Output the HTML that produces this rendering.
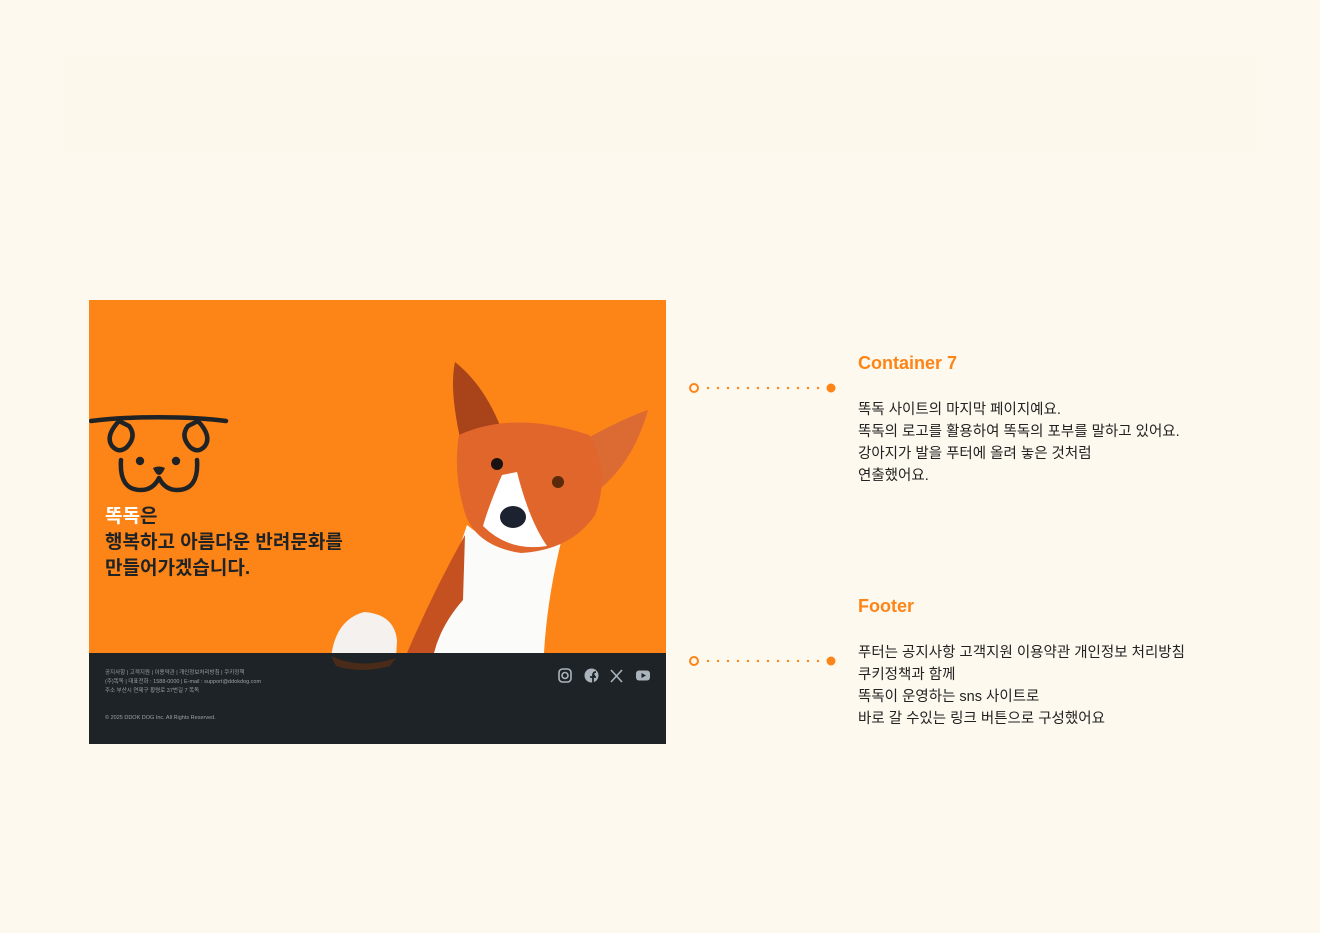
<!DOCTYPE html>
<html><head><meta charset="utf-8"><style>
body{margin:0;width:1320px;height:933px;background:#fef9ee;font-family:"Liberation Sans","Noto Sans CJK KR",sans-serif;position:relative;overflow:hidden}
.band{position:absolute;left:65px;top:55px;width:1190px;height:98px;background:#fdf8ec}
.frame{position:absolute;left:89px;top:300px;width:577px;height:444px;background:#fd8417;overflow:hidden}
.foot{position:absolute;left:0;top:353px;width:577px;height:91px;background:#1e2327}
.ft{position:absolute;left:16px;color:#9aa0a5;font-size:5.5px;line-height:9px}
.h{position:absolute;left:16px;top:204px;font-size:19px;font-weight:bold;line-height:26px;color:#1f2326}
.t{position:absolute;left:858px;color:#fd8417;font-size:18px;font-weight:bold}
.p{position:absolute;left:858px;color:#222;font-size:14.5px;line-height:22px}
</style></head><body>
<div class="band"></div>
<div class="frame">
<svg width="577" height="444" style="position:absolute;left:0;top:0">
<g fill="none" stroke="#1f2326" stroke-width="4.5" stroke-linecap="round" stroke-linejoin="round">
<path d="M2 121 C40 116 100 116 137 121"/>
<path d="M30 121 L40 126 Q48 136 38 147 Q30 154 23 146 Q16 136 30 121Z"/>
<path d="M109 121 L99 126 Q91 136 101 147 Q109 154 116 146 Q123 136 109 121Z"/>
<path d="M32 160 Q30 190 52 190 Q64 190 70 178 Q76 190 88 190 Q110 190 108 160"/>
</g>
<g fill="#1f2326"><circle cx="51" cy="161" r="4.2"/><circle cx="87" cy="161" r="4.2"/><path d="M64 168 Q70 165 76 168 Q73 175 70 175 Q67 175 64 168Z"/></g>
<!-- dog -->
<path d="M330 353 Q360 280 378 225 Q420 260 472 242 Q458 300 455 353Z" fill="#fbfbfa"/>
<path d="M318 353 Q345 290 376 235 L374 300 Q352 325 345 353Z" fill="#c4511f"/>
<path d="M372 142 Q360 90 366 62 Q395 85 412 128Z" fill="#a8431a"/>
<path d="M495 140 Q535 118 559 110 Q545 160 512 188Z" fill="#dc6a33"/>
<path d="M370 135 Q425 110 500 135 Q522 172 506 215 Q482 250 432 253 Q385 246 375 210 Q364 172 370 135Z" fill="#e0662c"/>
<path d="M413 175 Q400 205 394 226 Q420 252 458 246 Q440 220 428 172Z" fill="#fff"/>
<ellipse cx="424" cy="217" rx="13" ry="11" fill="#1d2230"/>
<circle cx="408" cy="164" r="6" fill="#1a1210"/><circle cx="469" cy="182" r="6" fill="#5a2a0a"/>
<path d="M242 358 Q246 320 275 312 Q305 314 308 340 L307 360 Q272 372 242 358Z" fill="#f4f1ee"/>
<path d="M242 356 Q272 370 307 358 L301 366 Q272 374 247 366Z" fill="#4a2a18"/>
</svg>
<div class="h"><span style="color:#fff">똑독</span>은<br>행복하고 아름다운 반려문화를<br>만들어가겠습니다.</div>
<div class="foot">
<div class="ft" style="top:16px">공지사항 | 고객지원 | 이용약관 | 개인정보처리방침 | 쿠키정책<br>(주)똑독 | 대표전화 : 1588-0000 | E-mail : support@ddokdog.com<br>주소 부산시 연제구 황령로 37번길 7 똑독</div>
<div class="ft" style="top:61px">© 2025 DDOK DOG Inc. All Rights Reserved.</div>
<svg style="position:absolute;left:468px;top:14px" width="96" height="18" fill="none" stroke="#aab4bc" stroke-width="1.6">
<rect x="2" y="2" width="12" height="13" rx="3.5"/><circle cx="8" cy="8.5" r="3"/>
<circle cx="34.5" cy="8.5" r="7" fill="#aab4bc" stroke="none"/><path d="M36 16V8.5H38M36 8.5Q36 5 39 5M33 10H39" stroke="#1e2327" stroke-width="1.8"/>
<path d="M54 3L65 15M65 3L54 15" />
<rect x="79" y="3.5" width="14" height="10" rx="3" fill="#aab4bc" stroke="none"/><path d="M84.5 6V11L89 8.5Z" fill="#1e2327" stroke="none"/>
</svg>
</div>
<svg width="577" height="444" style="position:absolute;left:0;top:0"><path d="M242 356 Q272 370 307 358 L301 366 Q272 374 247 366Z" fill="#4a2a18"/></svg>
</div>
<svg width="160" height="300" style="position:absolute;left:684px;top:370px">
<g fill="#fd8417"><circle cx="10" cy="18" r="4" fill="none" stroke="#fd8417" stroke-width="2"/><circle cx="147" cy="18" r="4.5"/>
<circle cx="10" cy="291" r="4" fill="none" stroke="#fd8417" stroke-width="2"/><circle cx="147" cy="291" r="4.5"/>
<g id="d"><circle cx="24" cy="18" r="1.2"/><circle cx="34" cy="18" r="1.2"/><circle cx="44" cy="18" r="1.2"/><circle cx="54" cy="18" r="1.2"/><circle cx="64" cy="18" r="1.2"/><circle cx="74" cy="18" r="1.2"/><circle cx="84" cy="18" r="1.2"/><circle cx="94" cy="18" r="1.2"/><circle cx="104" cy="18" r="1.2"/><circle cx="114" cy="18" r="1.2"/><circle cx="124" cy="18" r="1.2"/><circle cx="134" cy="18" r="1.2"/></g>
<use href="#d" y="273"/></g></svg>
<div class="t" style="top:353px">Container 7</div>
<div class="p" style="top:399px">똑독 사이트의 마지막 페이지예요.<br>똑독의 로고를 활용하여 똑독의 포부를 말하고 있어요.<br>강아지가 발을 푸터에 올려 놓은 것처럼<br>연출했어요.</div>
<div class="t" style="top:596px">Footer</div>
<div class="p" style="top:642px">푸터는 공지사항 고객지원 이용약관 개인정보 처리방침<br>쿠키정책과 함께<br>똑독이 운영하는 sns 사이트로<br>바로 갈 수있는 링크 버튼으로 구성했어요</div>
</body></html>
